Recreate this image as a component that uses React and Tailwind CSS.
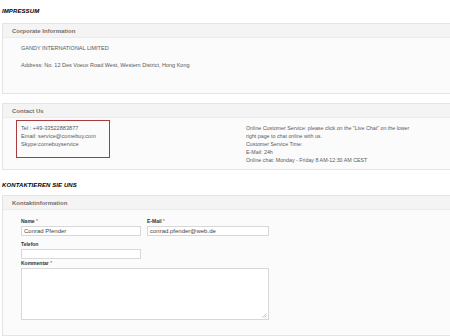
import React from 'react';

function Section({ title, className = '', children }) {
  return (
    <div className={`ml-[2px] w-[460px] border border-[#e4e4e4] bg-[#fbfbfb] ${className}`}>
      <div className="h-[14px] border-b border-[#ececec] bg-[#f4f4f4] pl-[9px] text-[6px] font-bold leading-[14px] text-[#707070]">
        {title}
      </div>
      {children}
    </div>
  );
}

function Field({ label, required, value, width = 'w-[120px]' }) {
  return (
    <div className="flex flex-col">
      <span className="h-[9px] text-[5px] font-bold leading-[9px] text-[#333]">
        {label}
        {required && <span className="font-normal text-[#c33]"> *</span>}
      </span>
      <div className={`${width} h-[10px] border border-[#d8d8d8] bg-white pl-[2px] text-[6px] leading-[8px] text-[#444]`}>
        {value}
      </div>
    </div>
  );
}

export default function App() {
  return (
    <div className="h-[336px] w-[450px] overflow-hidden bg-white font-['Liberation_Sans',Arial,sans-serif]">
      <div className="pl-[2px] pt-[8px] text-[6px] font-bold italic leading-[7px] tracking-[0.1px] text-black">
        IMPRESSUM
      </div>

      {/* corporate */}
      <Section title="Corporate Information" className="mt-[8px] h-[71px]">
        <div className="pl-[18px] pt-[6px] text-[5.5px] leading-[8px] text-[#5a5a5a]">
          <div>GANDY INTERNATIONAL LIMITED</div>
          <div className="mt-[9px]">Address: No. 12 Des Voeux Road West, Western District, Hong Kong</div>
        </div>
      </Section>

      {/* contact */}
      <Section title="Contact Us" className="mt-[9px] h-[67px]">
        <div className="flex pt-[2px] text-[5.6px] leading-[8px] text-[#5a5a5a]">
          <div className="ml-[13px] h-[38px] w-[94px] border border-[#a83b3b] pl-[4px] pt-[3px]">
            <div>Tel : +49-33522883877</div>
            <div>Email: service@comebuy.com</div>
            <div>Skype:comebuyservice</div>
          </div>
          <div className="ml-[136px] pt-[4px] text-[5.3px]">
            <div>Online Customer Service: please click on the "Live Chat" on the lower</div>
            <div>right page to chat online with us.</div>
            <div>Customer Service Time:</div>
            <div>E-Mail: 24h</div>
            <div>Online chat: Monday - Friday 8 AM-12:30 AM CEST</div>
          </div>
        </div>
      </Section>

      <div className="pl-[2px] pt-[12px] text-[6px] font-bold italic leading-[7px] tracking-[0.1px] text-black">
        KONTAKTIEREN SIE UNS
      </div>

      {/* form */}
      <Section title="Kontaktinformation" className="mt-[6px] h-[141px]">
        <div className="pl-[18px] pt-[7px]">
          <div className="flex gap-[6px]">
            <Field label="Name" required value="Conrad Pfender" />
            <Field label="E-Mail" required value="conrad.pfender@web.de" width="w-[122px]" />
          </div>
          <div className="mt-[4px]">
            <Field label="Telefon" />
          </div>
          <div className="flex flex-col">
            <span className="h-[9px] text-[5px] font-bold leading-[9px] text-[#333]">
              Kommentar<span className="font-normal text-[#c33]"> *</span>
            </span>
            <div className="relative h-[52px] w-[248px] border border-[#d8d8d8] bg-white">
              <svg className="absolute bottom-[1px] right-[1px]" width="5" height="5" viewBox="0 0 5 5">
                <path d="M4.5 0.5 L0.5 4.5 M4.5 2.5 L2.5 4.5" stroke="#aaa" strokeWidth="0.7" />
              </svg>
            </div>
          </div>
        </div>
      </Section>
    </div>
  );
}
